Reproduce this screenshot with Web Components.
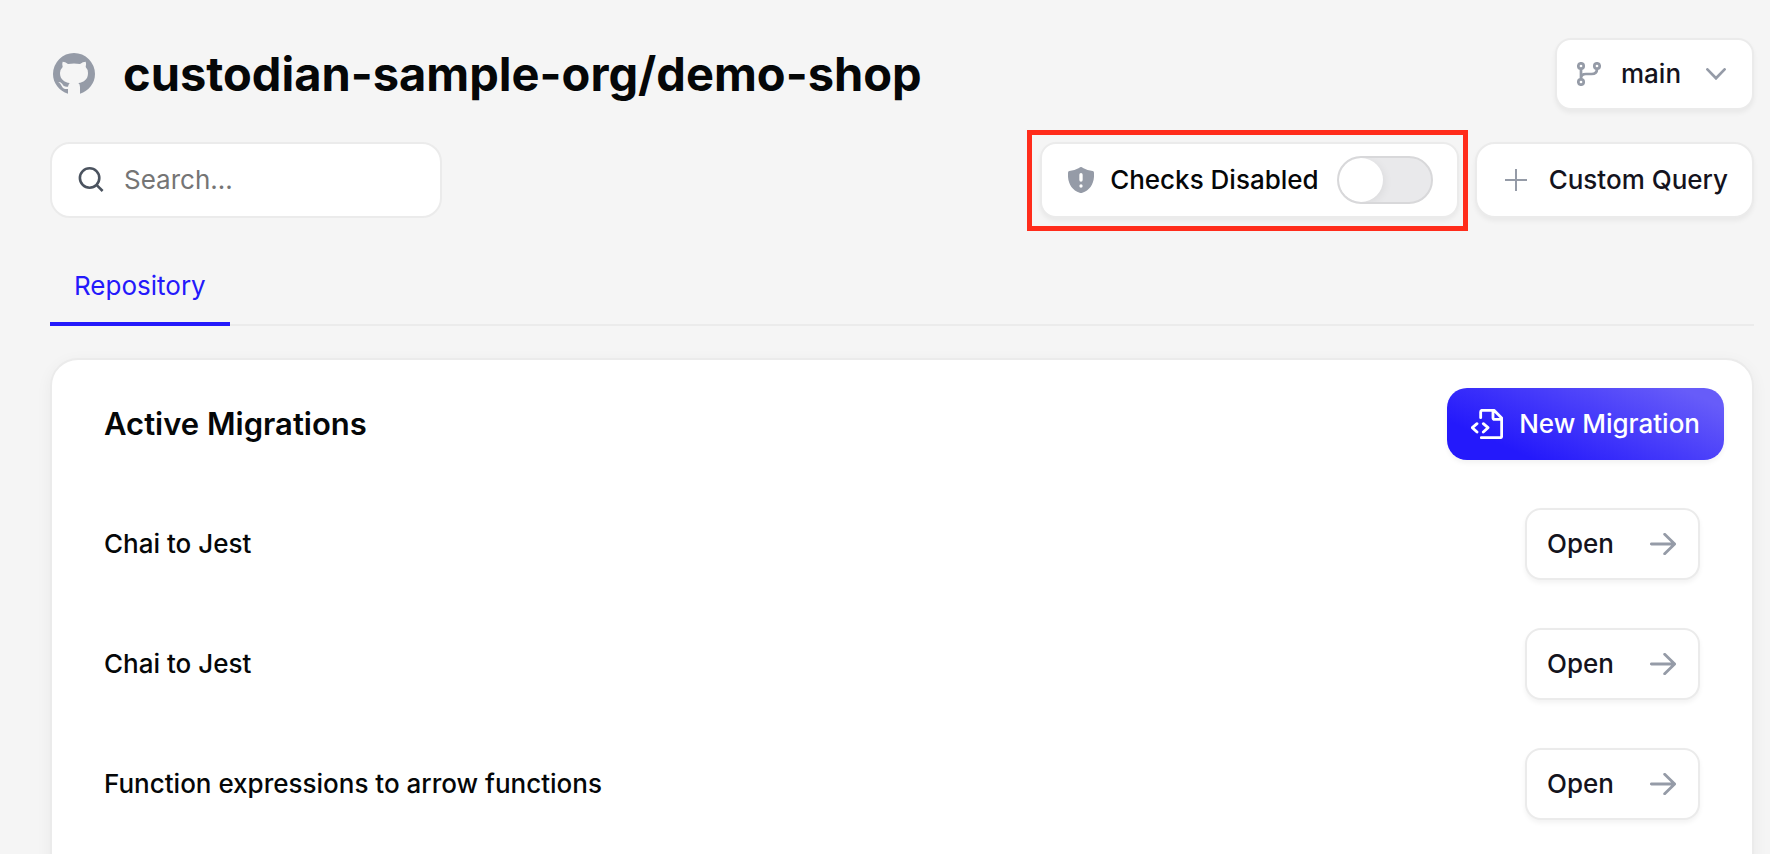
<!DOCTYPE html>
<html lang="en">
<head>
<meta charset="utf-8">
<meta name="viewport" content="width=device-width, initial-scale=1">
<title>custodian-sample-org/demo-shop</title>
<style>
  :root {
    --page: #f5f5f5;
    --line: #ebebeb;
    --ink: #050708;
    --button-ink: #14131d;
    --muted: #959ba7;
    --accent: #2419fb;
    --shadow: 0 3px 5px rgba(0, 0, 0, .05);
  }
  body {
    margin: 0;
    background: var(--page);
    color: var(--ink);
    font: 500 26px/32px Inter, "Liberation Sans", sans-serif;
  }
</style>
</head>
<body>
<repo-page></repo-page>

<script>
  const icons = {
    github: [42, 42, '69 70 126 126', '<path fill="currentColor" d="M114 192C88 184 69 161 69 133a63 63 0 0 1 126 0C195 161 176 184 150 192V172Q150 163 145 160C162 158 174 149 174 130Q174 119 167 112Q170 104 167 96Q159 96 150 103Q132 100 114 103Q105 96 98 96Q95 104 98 112Q90 120 90 130C90 149 103 158 119 160Q115 165 114 171C104 172 100 169 97 163Q92 156 85 157Q92 162 95 169C99 178 106 179 114 178Z"/>'],
    search: [26, 26, '0 0 26 26', '<g fill="none" stroke="currentColor" stroke-width="2.6"><circle cx="11.6" cy="11" r="9.7"/><path d="M18.500 17.900 24.600 24"/></g>'],
    branch: [24, 24, '0 0 24 24', '<g fill="none" stroke="currentColor" stroke-width="2.7"><circle cx="4" cy="4" r="2.700"/><circle cx="20" cy="4" r="2.700"/><circle cx="4" cy="20" r="2.700"/><path d="M4 7v10M20 7c0 3.500-2.500 5-5.500 5H9c-3 0-5 1.500-5 4.500"/></g>'],
    chevron: [20, 12, '0 0 20 12', '<path d="M1.400 1.400 10 10.300 18.600 1.400" fill="none" stroke="currentColor" stroke-width="2.700" stroke-linecap="round"/>'],
    plus: [22, 22, '0 0 22 22', '<path d="M11 0v22M0 11h22" stroke="currentColor" stroke-width="2"/>'],
    shield: [26, 26, '174 142 78 78', '<path fill="currentColor" d="M213 142Q216 142 219 145Q233 153 248 154Q252 155 252 159C254 190 241 211 217 219Q213 221 209 219C185 211 172 190 174 159Q174 155 178 154Q193 153 207 145Q210 142 213 142Z"/><path d="M213 165v16M213 199v.100" stroke="#fff" stroke-width="10" stroke-linecap="round"/>'],
    migrate: [32, 30, '153 204 96 90', '<g fill="none" stroke="currentColor" stroke-width="8.500" stroke-linecap="round" stroke-linejoin="round"><path d="M182 230V213q0-5 5-5H222L245 231V285q0 5-5 5H184M219 209V230q0 5 5 5H245M171 248 157 260 171 273M190 248 204 260 190 273"/></g>'],
    arrow: [26, 22, '687 578 78 66', '<path d="M691 611H761M731 582 761 611 731 640" fill="none" stroke="currentColor" stroke-width="8.500" stroke-linecap="round" stroke-linejoin="round"/>']
  };

  class BaseElement extends HTMLElement {
    connectedCallback() {
      if (this.shadowRoot) return;
      const template = document.createElement('template');
      template.innerHTML = `<style>*{box-sizing:border-box}${this.styles()}</style>${this.markup()}`;
      this.attachShadow({ mode: 'open' }).append(template.content.cloneNode(true));
    }
  }

  customElements.define('ui-icon', class extends BaseElement {
    styles() { return ':host{display:block;flex:none;color:var(--muted)}svg{display:block}'; }
    markup() {
      const [w, h, box, body] = icons[this.getAttribute('name')];
      return `<svg width="${w}" height="${h}" viewBox="${box}" aria-hidden="true">${body}</svg>`;
    }
  });

  customElements.define('ui-button', class extends BaseElement {
    styles() {
      return `
        :host{display:block;flex:none}
        button{display:flex;align-items:center;gap:22px;width:100%;height:72px;padding:0 22px 0 20px;
          border:2px solid var(--line);border-radius:16px;background:#fff;color:var(--button-ink);
          font:inherit;box-shadow:var(--shadow);cursor:pointer}
        :host([kind=open]) button{gap:36px}
        :host([kind=query]) button{height:76px;padding:0 24px 0 28px;border-radius:20px}
        :host([kind=primary]) button{gap:16px;padding:0 24px;border:0;border-radius:20px;color:#fff;
          background:linear-gradient(24deg,#2419fb 20%,#675cf9 90%)}`;
    }
    markup() { return '<button type="button"><slot></slot></button>'; }
  });

  customElements.define('branch-picker', class extends BaseElement {
    styles() {
      return `
        :host{display:flex;align-items:center;flex:none;height:72px;padding:0 26px 0 20px;
          border:2px solid var(--line);border-radius:16px;background:#fff;box-shadow:var(--shadow)}
        select{appearance:none;margin:0 24px 0 20px;padding:0;border:0;background:none;
          color:var(--button-ink);font:inherit;cursor:pointer}`;
    }
    markup() {
      return `<ui-icon name="branch"></ui-icon>
        <select aria-label="Branch"><option>main</option></select>
        <ui-icon name="chevron"></ui-icon>`;
    }
  });

  customElements.define('search-box', class extends BaseElement {
    styles() {
      return `
        :host{display:flex;align-items:center;gap:20px;width:392px;height:76px;padding:0 26px;
          border:2px solid var(--line);border-radius:20px;background:#fff}
        ui-icon{color:#4b535f}
        input{flex:1;min-width:0;padding:0;border:0;outline:0;background:none;color:inherit;
          font:inherit;font-weight:400}
        input::placeholder{color:#757575;opacity:1}`;
    }
    markup() {
      return `<ui-icon name="search"></ui-icon>
        <input type="text" placeholder="Search..." aria-label="Search">`;
    }
  });

  customElements.define('checks-toggle', class extends BaseElement {
    styles() {
      return `
        :host{display:flex;align-items:center;gap:16px;position:relative;flex:none;height:76px;
          padding:0 24px 0 26px;border:2px solid var(--line);border-radius:16px;background:#fff;
          box-shadow:var(--shadow)}
        :host::after{content:"";position:absolute;inset:-14px -11px -15px -15px;
          border:5px solid #ff2c1b;pointer-events:none}
        label{padding-right:2px}
        input{appearance:none;flex:none;width:96px;height:48px;margin:0;border:2px solid #d8d8da;
          border-radius:24px;background:#e9e9eb;overflow:hidden;cursor:pointer}
        input::before{content:"";display:block;width:44px;height:44px;border-radius:50%;
          background:#fff;box-shadow:2px 2px 8px rgba(0,0,0,.06)}
        input:checked{background:var(--accent)}
        input:checked::before{margin-left:auto}`;
    }
    markup() {
      return `<ui-icon name="shield"></ui-icon>
        <label for="checks">Checks Disabled</label>
        <input id="checks" type="checkbox" role="switch">`;
    }
  });

  customElements.define('tab-bar', class extends BaseElement {
    styles() {
      return `
        :host{display:block}
        nav{display:flex;height:76px;box-shadow:inset 0 -2px var(--line)}
        a{padding:20px 24px;border-bottom:4px solid var(--accent);color:var(--accent);
          font-weight:400;text-decoration:none}`;
    }
    markup() { return '<nav><a href="#repository" aria-current="page">Repository</a></nav>'; }
  });

  customElements.define('migration-row', class extends BaseElement {
    styles() {
      return ':host{display:flex;align-items:center;justify-content:space-between;padding-right:24px}';
    }
    markup() {
      return `<span><slot></slot></span>
        <ui-button kind="open">Open<ui-icon name="arrow"></ui-icon></ui-button>`;
    }
  });

  customElements.define('migrations-card', class extends BaseElement {
    styles() {
      return `
        :host{display:flex;flex-direction:column;gap:48px;padding:28px 28px 80px 52px;
          border:2px solid var(--line);border-radius:28px;background:#fff;
          box-shadow:0 4px 16px rgba(0,0,0,.05)}
        header{display:flex;align-items:center;justify-content:space-between}
        h2{margin:0;font-size:31px;font-weight:600;line-height:40px}
        ui-icon{color:#fff}`;
    }
    markup() {
      return `<header>
          <h2>Active Migrations</h2>
          <ui-button kind="primary"><ui-icon name="migrate"></ui-icon>New Migration</ui-button>
        </header>
        <slot></slot>`;
    }
  });

  customElements.define('repo-page', class extends BaseElement {
    styles() {
      return `
        :host{display:flex;flex-direction:column;gap:32px;padding:38px 16px 32px 50px}
        header,.tools{display:flex;align-items:center}
        header{padding-left:3px}
        h1{flex:1;margin:0 0 0 28px;font-size:47px;font-weight:700;line-height:56px}
        search-box{margin-right:auto}
        .tools{gap:16px}`;
    }
    markup() {
      return `<header>
          <ui-icon name="github"></ui-icon>
          <h1>custodian-sample-org/demo-shop</h1>
          <branch-picker></branch-picker>
        </header>
        <div class="tools">
          <search-box></search-box>
          <checks-toggle></checks-toggle>
          <ui-button kind="query"><ui-icon name="plus"></ui-icon>Custom Query</ui-button>
        </div>
        <tab-bar></tab-bar>
        <migrations-card>
          <migration-row>Chai to Jest</migration-row>
          <migration-row>Chai to Jest</migration-row>
          <migration-row>Function expressions to arrow functions</migration-row>
        </migrations-card>`;
    }
  });
</script>
</body>
</html>
